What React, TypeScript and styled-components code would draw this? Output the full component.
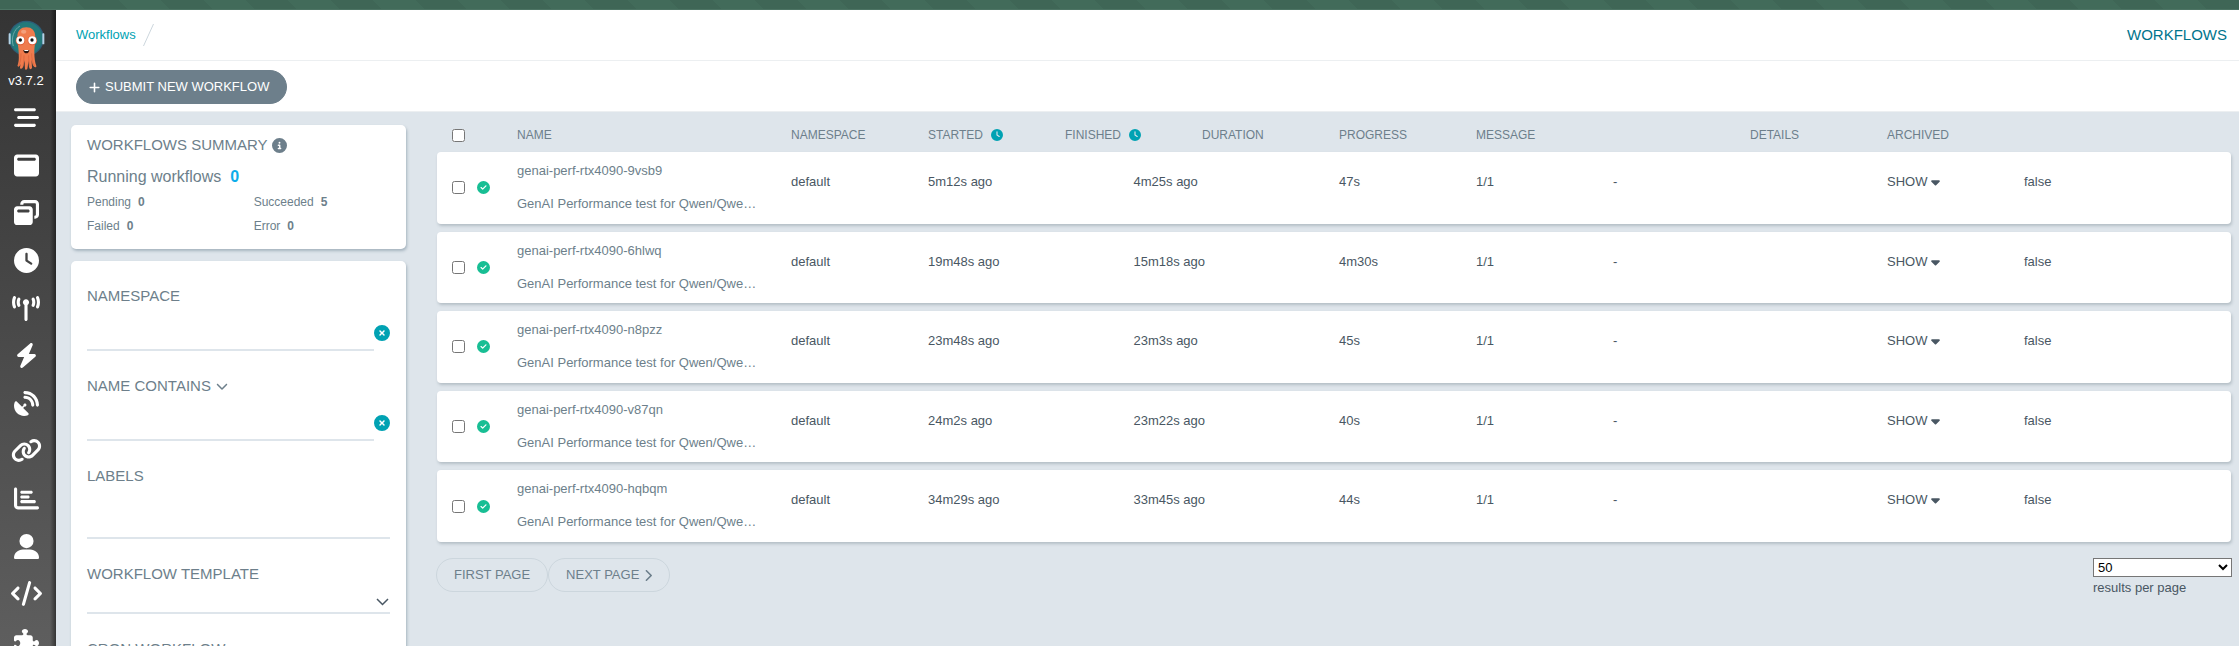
import React from 'react';
import styled, { createGlobalStyle, css } from 'styled-components';
import {
  FaBarsStaggered,
  FaBolt,
  FaCaretDown,
  FaChartBar,
  FaChevronDown,
  FaChevronRight,
  FaCircleCheck,
  FaCircleInfo,
  FaCircleXmark,
  FaClock,
  FaCode,
  FaLink,
  FaPlus,
  FaPuzzlePiece,
  FaSatelliteDish,
  FaTowerBroadcast,
  FaWindowMaximize,
  FaWindowRestore,
} from 'react-icons/fa6';

const color = {
  page: '#dee5eb',
  muted: '#6d7f8b',
  text: '#495763',
  teal: '#00a2b3',
  title: '#00748c',
  running: '#0dadea',
  success: '#18be94',
  outline: '#ccd6dd',
};

const GlobalStyle = createGlobalStyle`
  *, *::before, *::after { box-sizing: border-box; }
  body {
    margin: 0;
    background: ${color.page};
    color: ${color.text};
    font: 13px/18px "Liberation Sans", Arial, sans-serif;
  }
  button, input, select { font: inherit; }
  svg { display: block; flex: none; }
`;

const Shell = styled.div`
  display: flex;
  flex-direction: column;
  height: 100vh;
  overflow: hidden;
`;

const Banner = styled.div`
  flex: none;
  height: 10px;
  border-bottom: 1px solid #4d7464;
  background: repeating-linear-gradient(45deg, #3f6656 0 30px, #426b5a 30px 60px);
`;

const Body = styled.div`
  display: flex;
  flex: 1;
  min-height: 0;
`;

const Sidebar = styled.nav`
  flex: none;
  display: flex;
  flex-direction: column;
  align-items: center;
  width: 56px;
  padding: 10px 4px 0 0;
  color: #fff;
  background: linear-gradient(to right, transparent 50px, rgba(0, 0, 0, 0.45)),
    linear-gradient(#343434, #5e5e5e);
`;

const Version = styled.div`
  margin: 2px 0 4px;
`;

const NavList = styled.ul`
  flex: none;
  display: grid;
  grid-auto-rows: 1fr;
  height: 571px;
  margin: 0;
  padding: 0;
  list-style: none;
`;

const NavItem = styled.li`
  display: flex;
  align-items: center;
  justify-content: center;
`;

const NavLink = styled.a<{ $width: number }>`
  color: #fff;

  svg {
    width: ${(p) => p.$width}px;
    height: 25px;
  }
`;

const Main = styled.main`
  flex: 1;
  min-width: 0;
  overflow-y: auto;
  scrollbar-width: none;
`;

const TopBar = styled.header`
  display: flex;
  align-items: center;
  justify-content: space-between;
  height: 51px;
  padding: 0 12px 0 20px;
  background: #fff;
  border-bottom: 1px solid #eceff1;
`;

const Breadcrumb = styled.div`
  display: flex;
  align-items: center;
  gap: 7px;
`;

const CrumbLink = styled.a`
  color: ${color.teal};
  text-decoration: none;
`;

const PageTitle = styled.h1`
  margin: 0;
  color: ${color.title};
  font-size: 15px;
  font-weight: 400;
`;

const ActionBar = styled.div`
  display: flex;
  align-items: center;
  height: 51px;
  padding: 2px 20px 0;
  background: #fff;
  border-bottom: 1px solid #eceff1;
`;

const PillButton = styled.button<{ $filled?: boolean }>`
  display: inline-flex;
  align-items: center;
  gap: 5px;
  height: 34px;
  padding: 0 17px;
  border-radius: 17px;
  border: 1px solid ${color.outline};
  background: transparent;
  color: ${color.muted};

  svg {
    width: 8px;
    height: 13px;
  }

  ${(p) =>
    p.$filled &&
    css`
      padding: 0 17px 0 12px;
      border-color: ${color.muted};
      background: ${color.muted};
      color: #fff;

      svg {
        width: 11px;
      }
    `}
`;

const Content = styled.div`
  display: grid;
  grid-template-columns: 335px minmax(0, 1fr);
  gap: 31px;
  padding: 0 8px 0 15px;
`;

const Aside = styled.aside`
  display: flex;
  flex-direction: column;
  gap: 12px;
  padding-top: 13px;
`;

const Card = styled.section`
  padding: 8px 16px 11px;
  border-radius: 5px;
  background: #fff;
  box-shadow: 1px 2px 3px rgba(60, 90, 110, 0.35);
  color: ${color.muted};
`;

const SummaryTitle = styled.h2`
  display: flex;
  align-items: center;
  gap: 4px;
  margin: 0 0 8px;
  font-size: 15px;
  font-weight: 400;
  line-height: 24px;
`;

const RunningLine = styled.div`
  margin-bottom: 1px;
  font-size: 16px;
  line-height: 24px;
`;

const Count = styled.b<{ $running?: boolean }>`
  margin-left: ${(p) => (p.$running ? 9 : 7)}px;
  color: ${(p) => (p.$running ? color.running : 'inherit')};
`;

const Stats = styled.div`
  display: grid;
  grid-template-columns: 11fr 9fr;
  font-size: 12px;
  line-height: 24px;
`;

const FilterCard = styled(Card)`
  padding-top: 23px;
`;

const Filter = styled.div`
  margin-bottom: 23px;
`;

const FilterLabel = styled.label`
  display: flex;
  align-items: center;
  gap: 5px;
  font-size: 15px;
  line-height: 24px;
`;

const FieldRow = styled.div`
  display: flex;
  align-items: center;
`;

const TextField = styled.input<{ $height: number }>`
  flex: 1;
  min-width: 0;
  height: ${(p) => p.$height}px;
  padding: 0;
  border: 0;
  border-bottom: 2px solid ${color.page};
  background: transparent;
  color: ${color.text};
  outline: 0;
`;

const ClearButton = styled.button`
  padding: 6px 0 0;
  border: 0;
  background: none;
  color: ${color.teal};
  font-size: 16px;
`;

const SelectWrap = styled.div`
  position: relative;
`;

const FieldSelect = styled.select`
  display: block;
  appearance: none;
  width: 100%;
  height: 28px;
  border: 0;
  border-radius: 0;
  border-bottom: 2px solid ${color.page};
  background: transparent;
  outline: 0;
`;

const SelectArrow = styled.svg`
  position: absolute;
  right: 1px;
  top: 12px;
  pointer-events: none;
`;

const Listing = styled.div`
  min-width: 0;
`;

const Table = styled.table`
  display: block;
`;

const grid = css`
  display: grid;
  grid-template-columns: 80px repeat(24, minmax(0, 1fr)) 70px;
`;

const HeadRow = styled.tr`
  ${grid}
  align-items: center;
  height: 40px;
  padding-top: 6px;
`;

const Head = styled.thead`
  display: block;
`;

const Rows = styled.tbody`
  display: flex;
  flex-direction: column;
  gap: 8px;
  min-height: 390px;
`;

const Row = styled.tr`
  ${grid}
  flex: 1;
  border-radius: 4px;
  background: #fff;
  box-shadow: 1px 2px 3px rgba(60, 80, 90, 0.25);
`;

const HeadCell = styled.th<{ $span: number }>`
  display: flex;
  align-items: center;
  gap: 8px;
  grid-column: span ${(p) => p.$span};
  padding: 0;
  color: ${color.muted};
  font-size: 12px;
  font-weight: 400;
  text-align: left;
`;

const Cell = styled.td<{ $span: number }>`
  grid-column: span ${(p) => p.$span};
  padding: 21px 0 0;
`;

const CheckHead = styled.th`
  display: flex;
  padding: 0 0 0 15px;
`;

const CheckCell = styled.td`
  display: flex;
  align-items: center;
  gap: 12px;
  padding: 0 0 0 15px;
  color: ${color.success};
`;

const Checkbox = styled.input`
  width: 13px;
  height: 13px;
  margin: 0;
`;

const NameCell = styled.td`
  display: flex;
  flex-direction: column;
  gap: 15px;
  grid-column: span 4;
  padding: 10px 32px 10px 0;
`;

const NameLink = styled.a`
  overflow: hidden;
  color: ${color.muted};
  text-decoration: none;
  text-overflow: ellipsis;
  white-space: nowrap;
`;

const ShowButton = styled.button`
  display: flex;
  align-items: center;
  gap: 4px;
  padding: 0;
  border: 0;
  background: none;
  color: ${color.text};

  svg {
    width: 9px;
    height: 14px;
  }
`;

const ClockButton = styled.button`
  padding: 0;
  border: 0;
  background: none;
  color: ${color.teal};
  font-size: 12px;
`;

const Pager = styled.div`
  display: flex;
  justify-content: space-between;
  align-items: flex-start;
  margin: 16px -1px 0;
`;

const PageSize = styled.label`
  display: flex;
  flex-direction: column;
  gap: 2px;
  width: 139px;
`;

const PageSelect = styled.select`
  height: 19px;
  padding: 0;
  border: 1px solid #767676;
  border-radius: 0;
  background-color: #fff;
  color: #000;
`;

const Logo = () => (
  <svg width="37" height="50" viewBox="0 0 111 150" aria-label="Argo">
    <circle cx="55" cy="55" r="53" fill="#2d5d78" />
    <circle cx="55" cy="55" r="49" fill="#24797a" />
    <path d="M16 78C8 54 18 28 36 18" fill="none" stroke="#6aa7a8" strokeWidth="3" />
    <rect x="2" y="40" width="6" height="33" rx="2" fill="#b4d3e6" />
    <rect x="103" y="40" width="6" height="33" rx="2" fill="#b4d3e6" />
    <path
      d="M28 52C28 32 38 22 55 22s27 10 27 30c0 20-3 30-3 44 0 18 2 32 6 42 1 5-5 5-8 1-4-5-5-13-6-20 0 10 1 20 1 25-2 5-7 4-8 0-2-8-2-15-3-22-1 8-1 16-3 24-2 4-7 4-7 0-1-8-1-16-1-25-2 8-3 16-6 22-3 5-8 4-8 0 0-4 1-7 2-11-2 4-4 8-7 8-3-1-3-4-1-7C34 118 32 108 32 96c0-14-4-24-4-44z"
      fill="#ef7b4d"
    />
    <path
      d="M39 100c0 16-2 28-7 37M48 106c0 14-1 24-3 34M62 106c0 14 1 24 4 34M71 100c0 16 3 28 8 37"
      fill="none"
      stroke="#d8603a"
      strokeWidth="2"
    />
    <ellipse cx="47" cy="35" rx="8" ry="6" fill="#f4a07c" />
    <circle cx="37" cy="62" r="14" fill="#dc5a34" />
    <circle cx="73" cy="62" r="14" fill="#dc5a34" />
    <circle cx="37" cy="61" r="12" fill="#fff" />
    <circle cx="73" cy="61" r="12" fill="#fff" />
    <circle cx="37" cy="60" r="5" fill="#111" />
    <circle cx="72" cy="60" r="5" fill="#111" />
    <path d="M46 90h18c-1 7-4 10-9 10s-8-3-9-10z" fill="#2b1712" />
    <path d="M49 90h12v3H49z" fill="#fff" />
  </svg>
);

const UserIcon = () => (
  <svg viewBox="0 0 76 76" fill="currentColor">
    <circle cx="38" cy="21.500" r="21.500" />
    <path d="M0 72C0 58 12 47 27 47h22c15 0 27 11 27 25 0 2-2 4-4 4H4c-2 0-4-2-4-4z" />
  </svg>
);

const navItems = [
  { label: 'Workflows', Icon: FaBarsStaggered },
  { label: 'Workflow Templates', Icon: FaWindowMaximize },
  { label: 'Cluster Workflow Templates', Icon: FaWindowRestore },
  { label: 'Cron Workflows', Icon: FaClock },
  { label: 'Event Flow', Icon: FaTowerBroadcast, width: 28 },
  { label: 'Sensors', Icon: FaBolt },
  { label: 'Event Sources', Icon: FaSatelliteDish },
  { label: 'Workflow Event Bindings', Icon: FaLink, width: 31 },
  { label: 'Reports', Icon: FaChartBar },
  { label: 'User', Icon: UserIcon },
  { label: 'API Docs', Icon: FaCode, width: 31 },
  { label: 'Plugins', Icon: FaPuzzlePiece },
];

const headers = [
  { label: 'NAME', span: 4 },
  { label: 'NAMESPACE', span: 2 },
  { label: 'STARTED', span: 2, clock: true },
  { label: 'FINISHED', span: 2, clock: true },
  { label: 'DURATION', span: 2 },
  { label: 'PROGRESS', span: 2 },
  { label: 'MESSAGE', span: 4 },
  { label: 'DETAILS', span: 2 },
  { label: 'ARCHIVED', span: 2 },
];

const workflows = [
  { name: 'genai-perf-rtx4090-9vsb9', started: '5m12s ago', finished: '4m25s ago', duration: '47s' },
  { name: 'genai-perf-rtx4090-6hlwq', started: '19m48s ago', finished: '15m18s ago', duration: '4m30s' },
  { name: 'genai-perf-rtx4090-n8pzz', started: '23m48s ago', finished: '23m3s ago', duration: '45s' },
  { name: 'genai-perf-rtx4090-v87qn', started: '24m2s ago', finished: '23m22s ago', duration: '40s' },
  { name: 'genai-perf-rtx4090-hqbqm', started: '34m29s ago', finished: '33m45s ago', duration: '44s' },
];

const stats = [
  ['Pending', 0],
  ['Succeeded', 5],
  ['Failed', 0],
  ['Error', 0],
] as const;

const TemplateSelect = ({ id }: { id: string }) => (
  <SelectWrap>
    <FieldSelect id={id} />
    <SelectArrow width="13" height="8" viewBox="0 0 13 8" fill="none" stroke={color.text} strokeWidth="1.5">
      <path d="M1 1l5.5 5.5L12 1" />
    </SelectArrow>
  </SelectWrap>
);

export default function App() {
  return (
    <Shell>
      <GlobalStyle />
      <Banner />
      <Body>
        <Sidebar>
          <Logo />
          <Version>v3.7.2</Version>
          <NavList>
            {navItems.map(({ label, Icon, width = 25 }) => (
              <NavItem key={label}>
                <NavLink href="#" aria-label={label} $width={width}>
                  <Icon />
                </NavLink>
              </NavItem>
            ))}
          </NavList>
        </Sidebar>
        <Main>
          <TopBar>
            <Breadcrumb>
              <CrumbLink href="#">Workflows</CrumbLink>
              <svg width="11" height="24" viewBox="0 0 11 24" stroke={color.outline}>
                <path d="M.5 23L10.500 1" />
              </svg>
            </Breadcrumb>
            <PageTitle>WORKFLOWS</PageTitle>
          </TopBar>
          <ActionBar>
            <PillButton $filled type="button">
              <FaPlus />
              SUBMIT NEW WORKFLOW
            </PillButton>
          </ActionBar>
          <Content>
            <Aside>
              <Card>
                <SummaryTitle>
                  WORKFLOWS SUMMARY
                  <FaCircleInfo />
                </SummaryTitle>
                <RunningLine>
                  Running workflows<Count $running>0</Count>
                </RunningLine>
                <Stats>
                  {stats.map(([label, value]) => (
                    <div key={label}>
                      {label}
                      <Count>{value}</Count>
                    </div>
                  ))}
                </Stats>
              </Card>
              <FilterCard>
                <Filter>
                  <FilterLabel htmlFor="namespace">NAMESPACE</FilterLabel>
                  <FieldRow>
                    <TextField id="namespace" $height={43} />
                    <ClearButton type="button" aria-label="Clear namespace">
                      <FaCircleXmark />
                    </ClearButton>
                  </FieldRow>
                </Filter>
                <Filter>
                  <FilterLabel htmlFor="name">
                    NAME CONTAINS
                    <FaChevronDown size={12} />
                  </FilterLabel>
                  <FieldRow>
                    <TextField id="name" $height={43} />
                    <ClearButton type="button" aria-label="Clear name">
                      <FaCircleXmark />
                    </ClearButton>
                  </FieldRow>
                </Filter>
                <Filter>
                  <FilterLabel htmlFor="labels">LABELS</FilterLabel>
                  <FieldRow>
                    <TextField id="labels" $height={51} />
                  </FieldRow>
                </Filter>
                <Filter>
                  <FilterLabel htmlFor="template">WORKFLOW TEMPLATE</FilterLabel>
                  <TemplateSelect id="template" />
                </Filter>
                <Filter>
                  <FilterLabel htmlFor="cron">CRON WORKFLOW</FilterLabel>
                  <TemplateSelect id="cron" />
                </Filter>
              </FilterCard>
            </Aside>
            <Listing>
              <Table>
                <Head>
                  <HeadRow>
                    <CheckHead>
                      <Checkbox type="checkbox" aria-label="Select all workflows" />
                    </CheckHead>
                    {headers.map((h) => (
                      <HeadCell key={h.label} $span={h.span}>
                        {h.label}
                        {h.clock && (
                          <ClockButton type="button" aria-label={`Toggle ${h.label} format`}>
                            <FaClock />
                          </ClockButton>
                        )}
                      </HeadCell>
                    ))}
                  </HeadRow>
                </Head>
                <Rows>
                  {workflows.map((w) => (
                    <Row key={w.name}>
                      <CheckCell>
                        <Checkbox type="checkbox" aria-label={`Select ${w.name}`} />
                        <FaCircleCheck />
                      </CheckCell>
                      <NameCell>
                        <NameLink href="#">{w.name}</NameLink>
                        <NameLink href="#">GenAI Performance test for Qwen/Qwe…</NameLink>
                      </NameCell>
                      <Cell $span={2}>default</Cell>
                      <Cell $span={3}>{w.started}</Cell>
                      <Cell $span={3}>{w.finished}</Cell>
                      <Cell $span={2}>{w.duration}</Cell>
                      <Cell $span={2}>1/1</Cell>
                      <Cell $span={4}>-</Cell>
                      <Cell $span={2}>
                        <ShowButton type="button">
                          SHOW
                          <FaCaretDown />
                        </ShowButton>
                      </Cell>
                      <Cell $span={2}>false</Cell>
                    </Row>
                  ))}
                </Rows>
              </Table>
              <Pager>
                <div>
                  <PillButton type="button">FIRST PAGE</PillButton>
                  <PillButton type="button">
                    NEXT PAGE
                    <FaChevronRight />
                  </PillButton>
                </div>
                <PageSize>
                  <PageSelect defaultValue="50">
                    <option>5</option>
                    <option>10</option>
                    <option>20</option>
                    <option>50</option>
                    <option>100</option>
                  </PageSelect>
                  results per page
                </PageSize>
              </Pager>
            </Listing>
          </Content>
        </Main>
      </Body>
    </Shell>
  );
}
